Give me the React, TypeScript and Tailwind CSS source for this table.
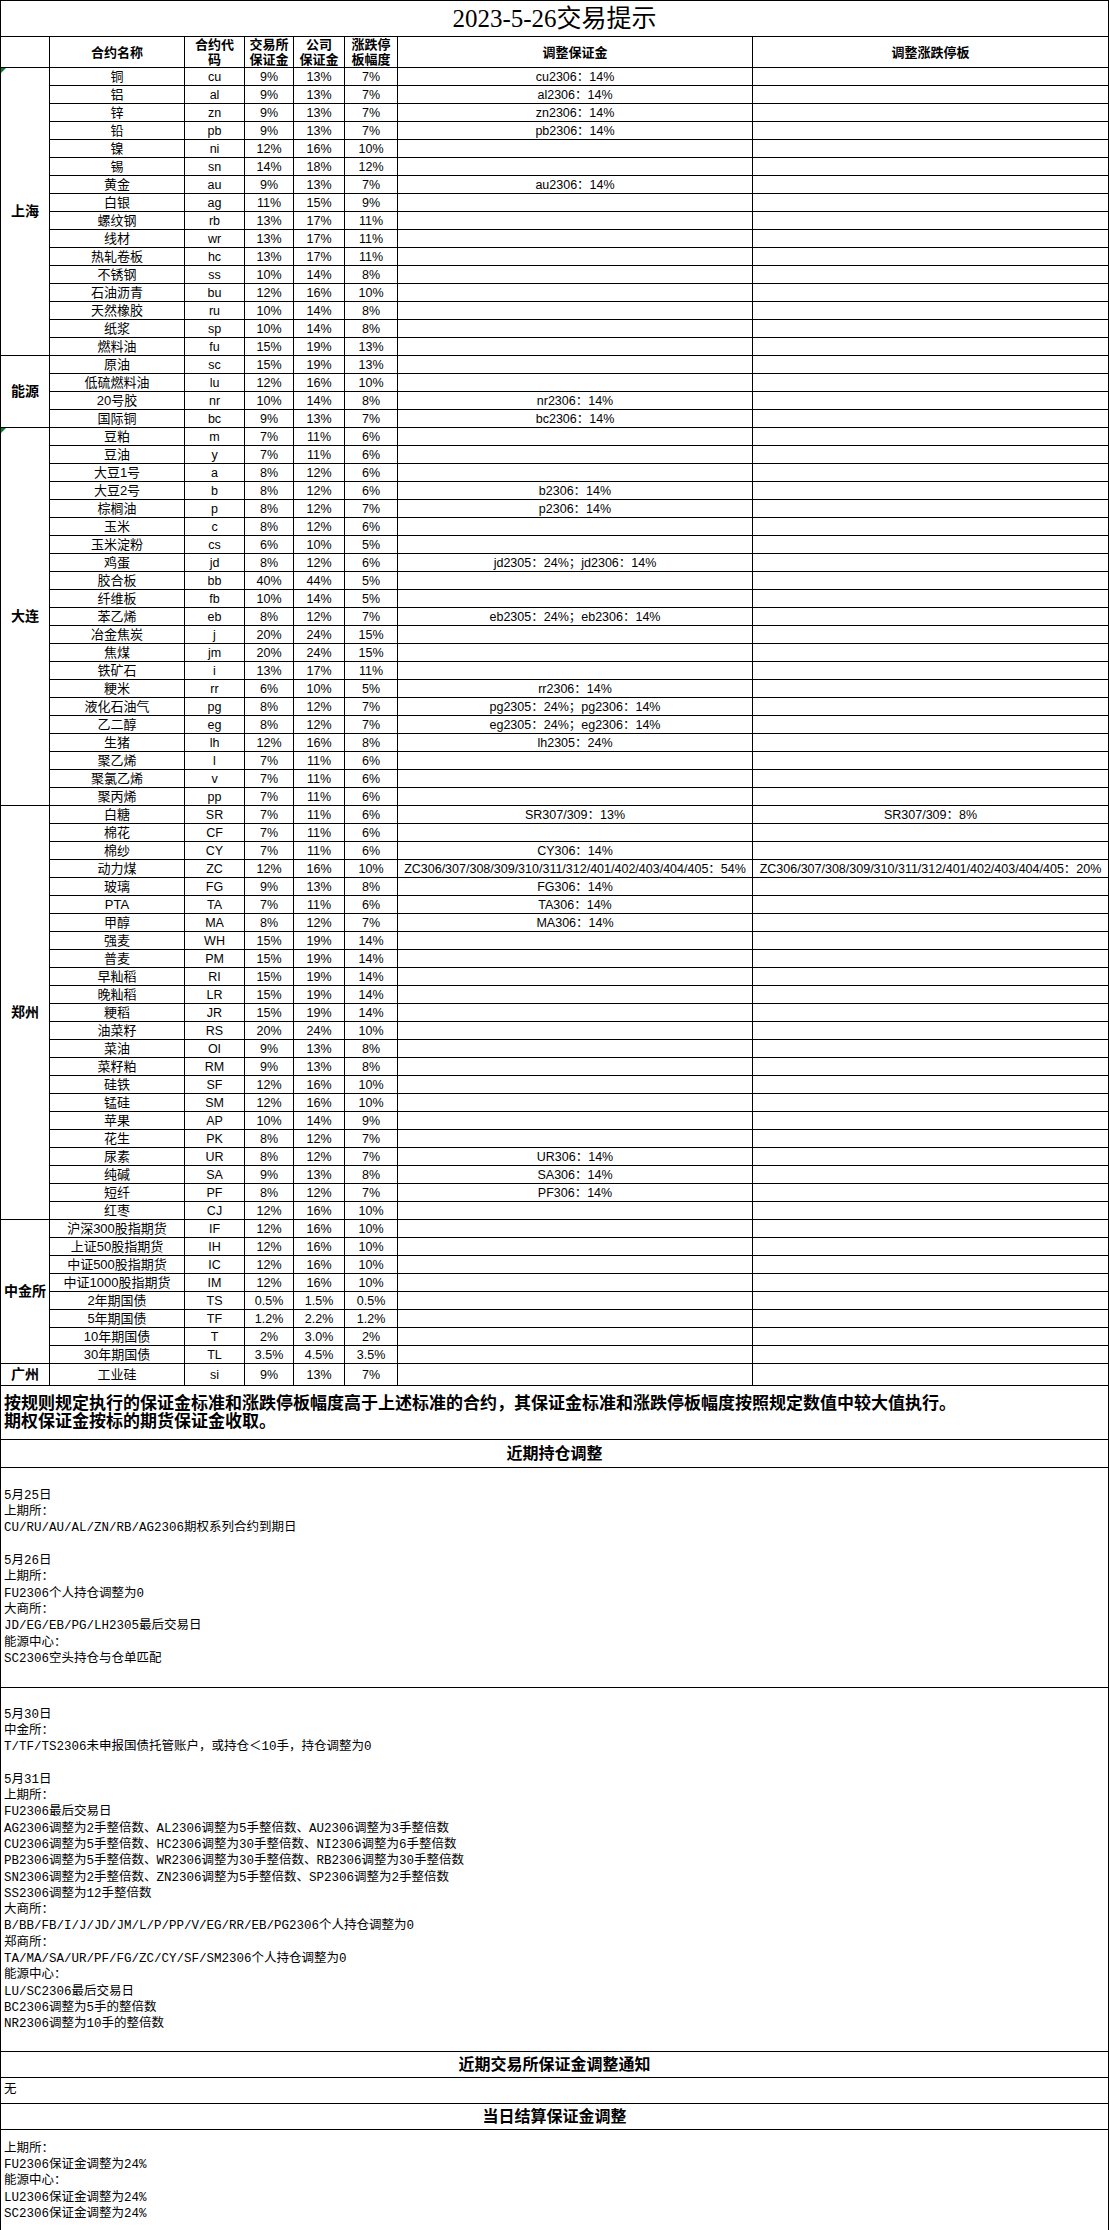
import React from "react";

// [name, code, exchange margin, company margin, limit, adjusted margin, adjusted limit]
type Row = [string, string, string, string, string, string?, string?];

type Group = { region: string; mark?: boolean; rows: Row[] };

const groups: Group[] = [
  {
    region: "上海",
    mark: true,
    rows: [
      ["铜", "cu", "9%", "13%", "7%", "cu2306：14%"],
      ["铝", "al", "9%", "13%", "7%", "al2306：14%"],
      ["锌", "zn", "9%", "13%", "7%", "zn2306：14%"],
      ["铅", "pb", "9%", "13%", "7%", "pb2306：14%"],
      ["镍", "ni", "12%", "16%", "10%"],
      ["锡", "sn", "14%", "18%", "12%"],
      ["黄金", "au", "9%", "13%", "7%", "au2306：14%"],
      ["白银", "ag", "11%", "15%", "9%"],
      ["螺纹钢", "rb", "13%", "17%", "11%"],
      ["线材", "wr", "13%", "17%", "11%"],
      ["热轧卷板", "hc", "13%", "17%", "11%"],
      ["不锈钢", "ss", "10%", "14%", "8%"],
      ["石油沥青", "bu", "12%", "16%", "10%"],
      ["天然橡胶", "ru", "10%", "14%", "8%"],
      ["纸浆", "sp", "10%", "14%", "8%"],
      ["燃料油", "fu", "15%", "19%", "13%"],
    ],
  },
  {
    region: "能源",
    rows: [
      ["原油", "sc", "15%", "19%", "13%"],
      ["低硫燃料油", "lu", "12%", "16%", "10%"],
      ["20号胶", "nr", "10%", "14%", "8%", "nr2306：14%"],
      ["国际铜", "bc", "9%", "13%", "7%", "bc2306：14%"],
    ],
  },
  {
    region: "大连",
    mark: true,
    rows: [
      ["豆粕", "m", "7%", "11%", "6%"],
      ["豆油", "y", "7%", "11%", "6%"],
      ["大豆1号", "a", "8%", "12%", "6%"],
      ["大豆2号", "b", "8%", "12%", "6%", "b2306：14%"],
      ["棕榈油", "p", "8%", "12%", "7%", "p2306：14%"],
      ["玉米", "c", "8%", "12%", "6%"],
      ["玉米淀粉", "cs", "6%", "10%", "5%"],
      ["鸡蛋", "jd", "8%", "12%", "6%", "jd2305：24%；jd2306：14%"],
      ["胶合板", "bb", "40%", "44%", "5%"],
      ["纤维板", "fb", "10%", "14%", "5%"],
      ["苯乙烯", "eb", "8%", "12%", "7%", "eb2305：24%；eb2306：14%"],
      ["冶金焦炭", "j", "20%", "24%", "15%"],
      ["焦煤", "jm", "20%", "24%", "15%"],
      ["铁矿石", "i", "13%", "17%", "11%"],
      ["粳米", "rr", "6%", "10%", "5%", "rr2306：14%"],
      ["液化石油气", "pg", "8%", "12%", "7%", "pg2305：24%；pg2306：14%"],
      ["乙二醇", "eg", "8%", "12%", "7%", "eg2305：24%；eg2306：14%"],
      ["生猪", "lh", "12%", "16%", "8%", "lh2305：24%"],
      ["聚乙烯", "l", "7%", "11%", "6%"],
      ["聚氯乙烯", "v", "7%", "11%", "6%"],
      ["聚丙烯", "pp", "7%", "11%", "6%"],
    ],
  },
  {
    region: "郑州",
    rows: [
      ["白糖", "SR", "7%", "11%", "6%", "SR307/309：13%", "SR307/309：8%"],
      ["棉花", "CF", "7%", "11%", "6%"],
      ["棉纱", "CY", "7%", "11%", "6%", "CY306：14%"],
      [
        "动力煤",
        "ZC",
        "12%",
        "16%",
        "10%",
        "ZC306/307/308/309/310/311/312/401/402/403/404/405：54%",
        "ZC306/307/308/309/310/311/312/401/402/403/404/405：20%",
      ],
      ["玻璃", "FG", "9%", "13%", "8%", "FG306：14%"],
      ["PTA", "TA", "7%", "11%", "6%", "TA306：14%"],
      ["甲醇", "MA", "8%", "12%", "7%", "MA306：14%"],
      ["强麦", "WH", "15%", "19%", "14%"],
      ["普麦", "PM", "15%", "19%", "14%"],
      ["早籼稻", "RI", "15%", "19%", "14%"],
      ["晚籼稻", "LR", "15%", "19%", "14%"],
      ["粳稻", "JR", "15%", "19%", "14%"],
      ["油菜籽", "RS", "20%", "24%", "10%"],
      ["菜油", "OI", "9%", "13%", "8%"],
      ["菜籽粕", "RM", "9%", "13%", "8%"],
      ["硅铁", "SF", "12%", "16%", "10%"],
      ["锰硅", "SM", "12%", "16%", "10%"],
      ["苹果", "AP", "10%", "14%", "9%"],
      ["花生", "PK", "8%", "12%", "7%"],
      ["尿素", "UR", "8%", "12%", "7%", "UR306：14%"],
      ["纯碱", "SA", "9%", "13%", "8%", "SA306：14%"],
      ["短纤", "PF", "8%", "12%", "7%", "PF306：14%"],
      ["红枣", "CJ", "12%", "16%", "10%"],
    ],
  },
  {
    region: "中金所",
    rows: [
      ["沪深300股指期货", "IF", "12%", "16%", "10%"],
      ["上证50股指期货", "IH", "12%", "16%", "10%"],
      ["中证500股指期货", "IC", "12%", "16%", "10%"],
      ["中证1000股指期货", "IM", "12%", "16%", "10%"],
      ["2年期国债", "TS", "0.5%", "1.5%", "0.5%"],
      ["5年期国债", "TF", "1.2%", "2.2%", "1.2%"],
      ["10年期国债", "T", "2%", "3.0%", "2%"],
      ["30年期国债", "TL", "3.5%", "4.5%", "3.5%"],
    ],
  },
  {
    region: "广州",
    rows: [["工业硅", "si", "9%", "13%", "7%"]],
  },
];

const positionNotes = `5月25日
上期所：
CU/RU/AU/AL/ZN/RB/AG2306期权系列合约到期日

5月26日
上期所：
FU2306个人持仓调整为0
大商所：
JD/EG/EB/PG/LH2305最后交易日
能源中心：
SC2306空头持仓与仓单匹配`;

const positionNotes2 = `5月30日
中金所：
T/TF/TS2306未申报国债托管账户，或持仓＜10手，持仓调整为0

5月31日
上期所：
FU2306最后交易日
AG2306调整为2手整倍数、AL2306调整为5手整倍数、AU2306调整为3手整倍数
CU2306调整为5手整倍数、HC2306调整为30手整倍数、NI2306调整为6手整倍数
PB2306调整为5手整倍数、WR2306调整为30手整倍数、RB2306调整为30手整倍数
SN2306调整为2手整倍数、ZN2306调整为5手整倍数、SP2306调整为2手整倍数
SS2306调整为12手整倍数
大商所：
B/BB/FB/I/J/JD/JM/L/P/PP/V/EG/RR/EB/PG2306个人持仓调整为0
郑商所：
TA/MA/SA/UR/PF/FG/ZC/CY/SF/SM2306个人持仓调整为0
能源中心：
LU/SC2306最后交易日
BC2306调整为5手的整倍数
NR2306调整为10手的整倍数`;

const settleNotes = `上期所：
FU2306保证金调整为24%
能源中心：
LU2306保证金调整为24%
SC2306保证金调整为24%`;

const cell = "border border-black p-0 text-center align-middle whitespace-nowrap";
const num = `${cell} text-[12.5px] leading-[16px]`;
const mono =
  "border border-black pl-[3px] align-middle whitespace-pre-line text-left font-[family-name:'Liberation_Mono','Noto_Sans_CJK_SC',monospace] text-[12.5px] leading-[16.3px]";
const sectionHead = "border border-black p-0 text-center align-middle font-bold text-[16px]";

export default function App() {
  return (
    <div className="bg-white text-black">
      <table className="w-[1108px] table-fixed border-collapse font-[family-name:'Liberation_Sans','Noto_Sans_CJK_SC',sans-serif]">
        <colgroup>
          <col className="w-[49px]" />
          <col className="w-[135px]" />
          <col className="w-[60px]" />
          <col className="w-[49px]" />
          <col className="w-[51px]" />
          <col className="w-[53px]" />
          <col className="w-[355px]" />
          <col className="w-[356px]" />
        </colgroup>
        <tbody>
          <tr className="h-[36px]">
            <td
              colSpan={8}
              className="border border-black p-0 text-center align-middle text-[25px] leading-none font-[family-name:'Liberation_Serif','Noto_Sans_CJK_SC',serif]">
              2023-5-26交易提示
            </td>
          </tr>

          {/* Column headers */}
          <tr className="h-[31px] font-bold text-[13px] leading-[15px]">
            <td className={cell}></td>
            <td className={cell}>合约名称</td>
            <td className={cell}>
              合约代
              <br />码
            </td>
            <td className={cell}>
              交易所
              <br />
              保证金
            </td>
            <td className={cell}>
              公司
              <br />
              保证金
            </td>
            <td className={cell}>
              涨跌停
              <br />
              板幅度
            </td>
            <td className={cell}>调整保证金</td>
            <td className={cell}>调整涨跌停板</td>
          </tr>

          {groups.map((g) =>
            g.rows.map((r, i) => (
              <tr key={g.region + r[1]} className="h-[18px]">
                {i === 0 && (
                  <td
                    rowSpan={g.rows.length}
                    className="relative border border-black p-0 text-center align-middle text-[14px] font-bold">
                    {g.mark && (
                      <span className="absolute left-0 top-0 h-0 w-0 border-t-[5px] border-r-[5px] border-t-green-700 border-r-transparent" />
                    )}
                    {g.region}
                  </td>
                )}
                <td className={`${cell} text-[13px] leading-[16px]`}>{r[0]}</td>
                <td className={num}>{r[1]}</td>
                <td className={num}>{r[2]}</td>
                <td className={num}>{r[3]}</td>
                <td className={num}>{r[4]}</td>
                <td className={`${num} overflow-hidden`}>{r[5] ?? ""}</td>
                <td className={`${num} overflow-hidden`}>{r[6] ?? ""}</td>
              </tr>
            )),
          )}

          {/* Rule note */}
          <tr className="h-[54px]">
            <td
              colSpan={8}
              className="border border-black pl-[3px] text-left align-middle text-[17px] leading-[18px] font-bold">
              按规则规定执行的保证金标准和涨跌停板幅度高于上述标准的合约，其保证金标准和涨跌停板幅度按照规定数值中较大值执行。
              <br />
              期权保证金按标的期货保证金收取。
            </td>
          </tr>

          <tr className="h-[28px]">
            <td colSpan={8} className={sectionHead}>
              近期持仓调整
            </td>
          </tr>
          <tr className="h-[220px]">
            <td colSpan={8} className={mono}>
              {positionNotes}
            </td>
          </tr>
          <tr className="h-[364px]">
            <td colSpan={8} className={mono}>
              {positionNotes2}
            </td>
          </tr>

          <tr className="h-[26px]">
            <td colSpan={8} className={sectionHead}>
              近期交易所保证金调整通知
            </td>
          </tr>
          <tr className="h-[26px]">
            <td colSpan={8} className={mono}>
              无
            </td>
          </tr>

          <tr className="h-[26px]">
            <td colSpan={8} className={sectionHead}>
              当日结算保证金调整
            </td>
          </tr>
          <tr className="h-[104px]">
            <td colSpan={8} className={mono}>
              {settleNotes}
            </td>
          </tr>
        </tbody>
      </table>
    </div>
  );
}
